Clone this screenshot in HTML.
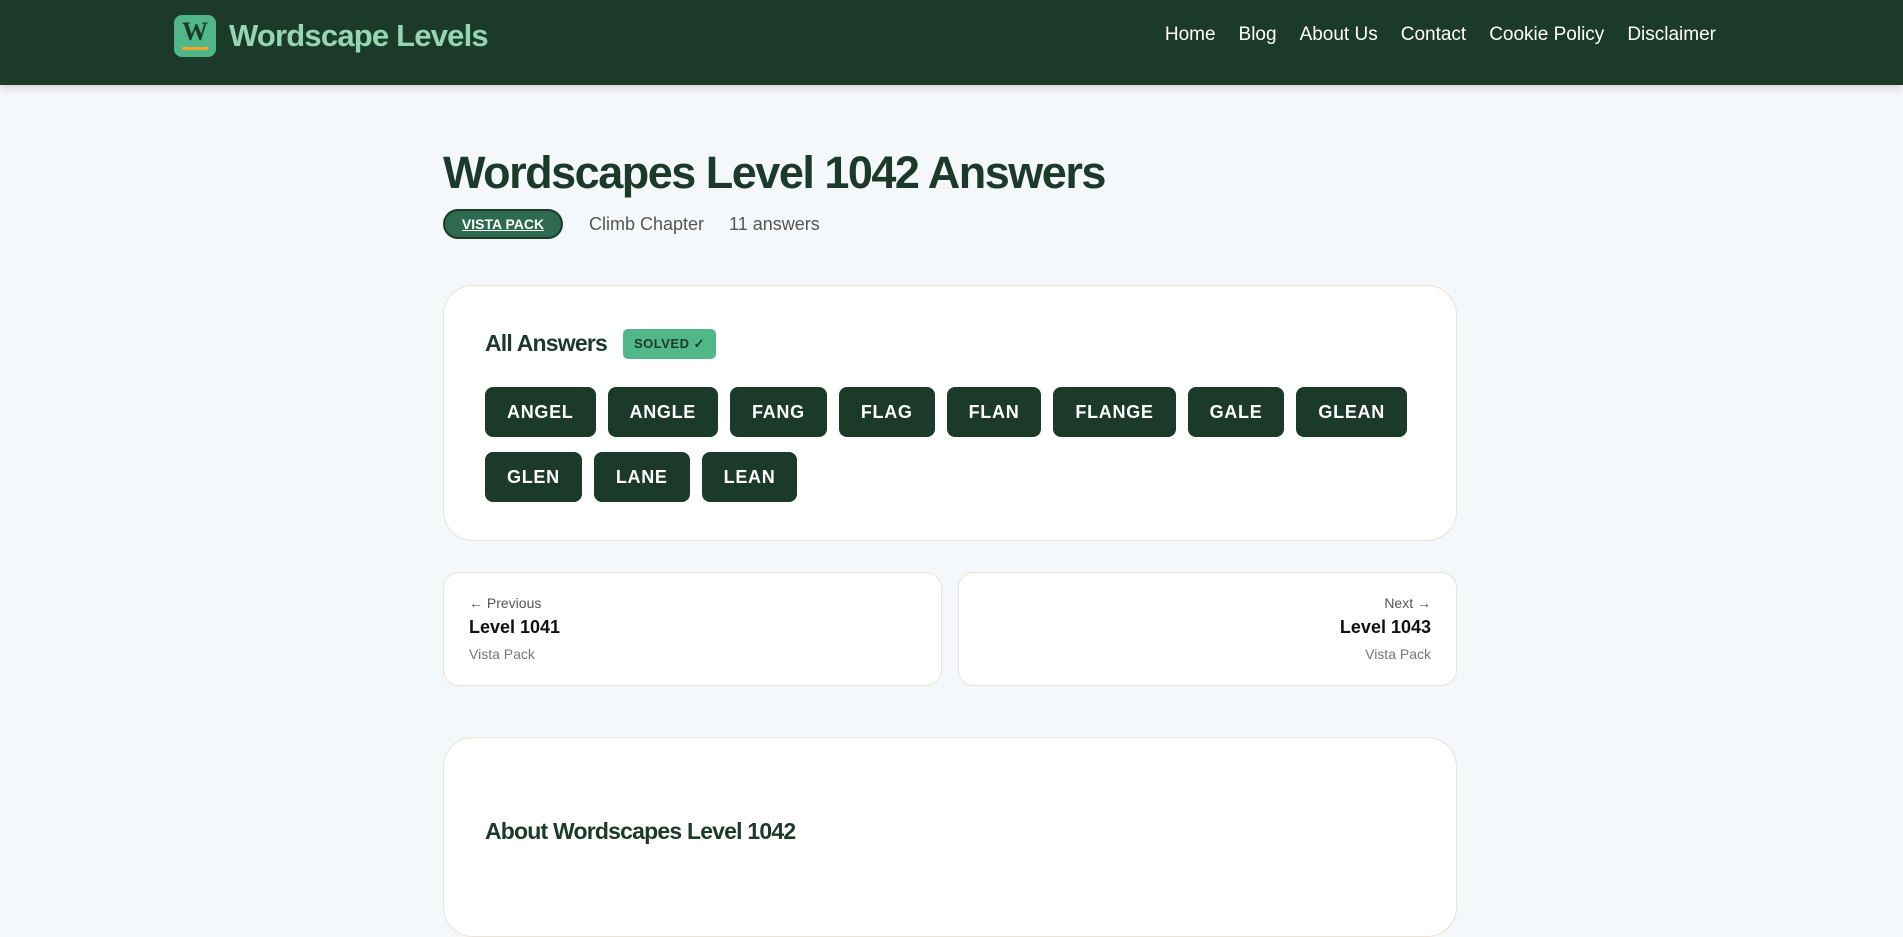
<!DOCTYPE html>
<html><head><meta charset="utf-8"><style>
*{box-sizing:border-box;margin:0;padding:0}
body{width:1903px;height:862px;overflow:hidden;background:#f4f8fa;font-family:"Liberation Sans",sans-serif;color:#1b3a2a}
header{height:85px;background:#1b3a2a;position:relative;box-shadow:0 3px 8px rgba(0,0,0,.15)}
.logo{position:absolute;left:174px;top:15px;width:42px;height:42px;border-radius:8px;background:#52b788;text-align:center}
.logo span{font-family:"Liberation Serif",serif;font-weight:bold;font-size:26px;color:#1b3a2a;line-height:34px}
.logo i{position:absolute;left:8px;right:8px;top:32px;height:3px;background:#f4a52a}
.brand{position:absolute;left:229px;top:18px;font-size:31px;font-weight:bold;color:#95d5b2;letter-spacing:-.8px}
nav{position:absolute;right:187px;top:24px;font-size:19px;color:#fff}
nav a{margin-left:23px;color:#fff;text-decoration:none}
.wrap{position:absolute;left:443px;width:1014px}
h1{position:absolute;left:443px;top:147px;font-size:45px;font-weight:bold;letter-spacing:-1.5px;color:#1b3a2a}
.meta{position:absolute;left:443px;top:209px;height:30px;display:flex;align-items:center;font-size:18px;color:#555}
.pill{background:#2d6a4f;color:#fff;border:2px solid #1b3a2a;border-radius:15px;height:30px;width:120px;font-size:14px;font-weight:bold;text-decoration:underline;display:flex;align-items:center;justify-content:center;margin-right:26px}
.card{background:#fff;border:1px solid #ebe3d6;border-radius:30px}
.c1{top:285px;height:256px}
.c1 h2{position:absolute;left:41px;top:44px;font-size:23px;letter-spacing:-.8px}
.solved{position:absolute;left:179px;top:43px;width:93px;height:30px;background:#52b788;border-radius:5px;font-size:13px;font-weight:bold;letter-spacing:.5px;display:flex;align-items:center;justify-content:center;color:#1b3a2a}
.words{position:absolute;left:41px;top:101px;width:940px;display:flex;flex-wrap:wrap;gap:15px 12px}
.words b{height:50px;background:#1b3a2a;color:#fff;border-radius:8px;font-size:18px;letter-spacing:.7px;display:flex;align-items:center;padding:0 22px}
.nc{position:absolute;top:572px;height:114px;width:499px;background:#fff;border:1px solid #ebe3d6;border-radius:16px;padding:22px 25px 0}
.nc small{display:block;font-size:14px;color:#555}
.nc strong{display:block;font-size:18px;margin-top:6px;color:#111}
.nc em{display:block;font-style:normal;font-size:14px;color:#777;margin-top:8px}
.c3{top:737px;height:200px}
.c3 h3{position:absolute;left:41px;top:80px;font-size:23px;letter-spacing:-.8px}
</style></head><body>
<header><div class="logo"><span>W</span><i></i></div><div class="brand">Wordscape Levels</div>
<nav><a>Home</a><a>Blog</a><a>About Us</a><a>Contact</a><a>Cookie Policy</a><a>Disclaimer</a></nav></header>
<h1>Wordscapes Level 1042 Answers</h1>
<div class="meta"><span class="pill">VISTA PACK</span><span style="margin-right:25px">Climb Chapter</span><span>11 answers</span></div>
<div class="wrap card c1"><h2>All Answers</h2><div class="solved">SOLVED ✓</div>
<div class="words"><b>ANGEL</b><b>ANGLE</b><b>FANG</b><b>FLAG</b><b>FLAN</b><b>FLANGE</b><b>GALE</b><b>GLEAN</b><b>GLEN</b><b>LANE</b><b>LEAN</b></div></div>
<div class="nc" style="left:443px"><small>← Previous</small><strong>Level 1041</strong><em>Vista Pack</em></div>
<div class="nc" style="left:958px;text-align:right"><small>Next →</small><strong>Level 1043</strong><em>Vista Pack</em></div>
<div class="wrap card c3"><h3>About Wordscapes Level 1042</h3></div>
</body></html>
